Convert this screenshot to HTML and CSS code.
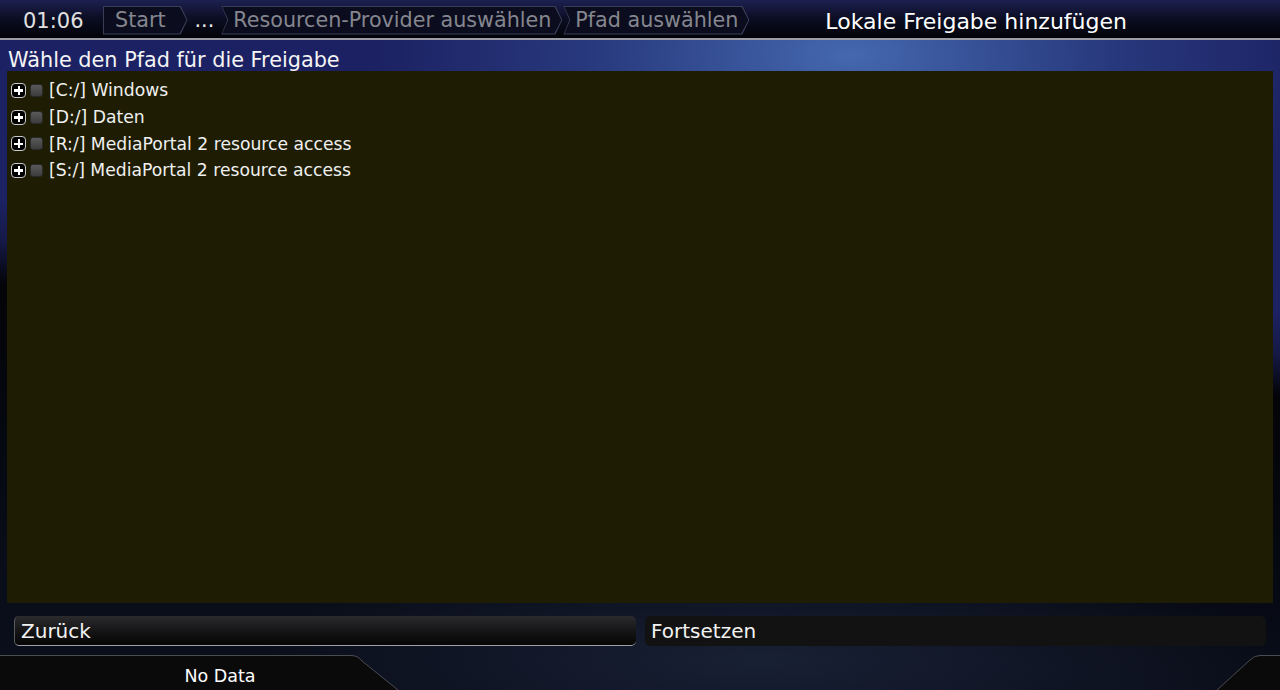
FILE: index.html
```html
<!DOCTYPE html>
<html lang="de">
<head>
    <meta charset="UTF-8">
    <meta name="viewport" content="width=device-width, initial-scale=1.0">
    <title>Lokale Freigabe hinzufügen</title>
    <link rel="stylesheet" href="styles.css">
</head>
<body>
    <header class="topbar">
        <div class="clock">01:06</div>
        <nav class="crumbs">
            <div class="crumb first">Start</div>
            <div class="crumb plain">...</div>
            <div class="crumb">Resourcen-Provider auswählen</div>
            <div class="crumb">Pfad auswählen</div>
        </nav>
        <div class="title">Lokale Freigabe hinzufügen</div>
    </header>

    <main class="content">
        <div class="prompt">Wähle den Pfad für die Freigabe</div>
        <ul class="tree">
            <li class="node"><span class="expander"></span><span class="check"></span>[C:/] Windows</li>
            <li class="node"><span class="expander"></span><span class="check"></span>[D:/] Daten</li>
            <li class="node"><span class="expander"></span><span class="check"></span>[R:/] MediaPortal 2 resource access</li>
            <li class="node"><span class="expander"></span><span class="check"></span>[S:/] MediaPortal 2 resource access</li>
        </ul>
        <div class="actions">
            <button class="btn focused">Zurück</button>
            <button class="btn">Fortsetzen</button>
        </div>
    </main>

    <footer class="footer">
        <div class="tab tab-left">
            <svg class="tab-shape" width="400" height="35" viewBox="0 0 400 35">
                <path d="M0 1 H351 Q358 1 362 6 L398 35 H0 Z" fill="#0a0a0b"/>
                <path d="M0 0.5 H351 Q358 0.5 362 6 L398 35" fill="none" stroke="#4b4b52" stroke-width="1"/>
            </svg>
            <span class="tab-text">No Data</span>
        </div>
        <div class="tab tab-right">
            <svg class="tab-shape" width="63" height="35" viewBox="0 0 63 35">
                <path d="M0 35 L33 5 Q37 1 43 1 H63 V35 Z" fill="#0a0a0b"/>
                <path d="M0 35 L33 5 Q37 0.5 43 0.5 H63" fill="none" stroke="#4b4b52" stroke-width="1"/>
            </svg>
        </div>
    </footer>
</body>
</html>
```

FILE: styles.css
```css
* {
    box-sizing: border-box;
}
html, body {
    margin: 0;
    height: 690px;
    overflow: hidden;
}
body {
    font-family: "DejaVu Sans", sans-serif;
    color: #f2f2f2;
    display: flex;
    flex-direction: column;
    background:
        radial-gradient(ellipse 480px 230px at 850px 55px, rgba(72, 110, 182, 0.92), rgba(55, 85, 155, 0.45) 55%, rgba(40, 60, 130, 0) 100%),
        radial-gradient(ellipse 520px 110px at 760px 660px, #182034, rgba(20, 26, 40, 0) 100%),
        linear-gradient(185deg, #1b2062 0, #1c2263 310px, #161a48 350px, #040408 395px, #070a14 600px, #0a0e1a 690px);
}

/* header */
.topbar {
    height: 40px;
    flex: none;
    display: flex;
    align-items: center;
    padding-left: 23px;
    background: linear-gradient(180deg, #1c2050 0, #0b0d22 50%, #020308 100%);
    border-bottom: 2px solid #9c9ca6;
}
.clock {
    font-size: 21px;
    color: #e0e0e0;
    width: 80px;
    margin-top: 4px;
}
.crumbs {
    display: flex;
    align-items: center;
    height: 29px;
    margin-top: 2px;
}
.crumb {
    position: relative;
    height: 29px;
    line-height: 29px;
    font-size: 20.7px;
    color: #85868e;
    padding: 0 11px 0 12px;
    background: #3a3d56;
    clip-path: polygon(0 0, calc(100% - 7px) 0, 100% 50%, calc(100% - 7px) 100%, 0 100%, 6px 50%);
    margin-right: 1px;
    z-index: 0;
}
.crumb::before {
    content: "";
    position: absolute;
    inset: 1px;
    background: #0b0d1e;
    clip-path: polygon(0 0, calc(100% - 7px) 0, 100% 50%, calc(100% - 7px) 100%, 0 100%, 6px 50%);
    z-index: -1;
}
.crumb.first {
    padding: 0 22px 0 12px;
    margin-right: 0;
    clip-path: polygon(0 0, calc(100% - 7px) 0, 100% 50%, calc(100% - 7px) 100%, 0 100%);
}
.crumb.first::before {
    clip-path: polygon(0 0, calc(100% - 7px) 0, 100% 50%, calc(100% - 7px) 100%, 0 100%);
}
.crumb.plain {
    background: none;
    clip-path: none;
    color: #e8e8e8;
    padding: 0 7px 0 7px;
    margin-right: 0;
}
.crumb.plain::before {
    display: none;
}
.title {
    font-size: 22px;
    color: #ffffff;
    margin-left: 75px;
    margin-top: 4px;
}

/* content */
.content {
    flex: 1;
    display: flex;
    flex-direction: column;
    padding: 0 7px;
}
.prompt {
    font-size: 20.8px;
    height: 31px;
    line-height: 20px;
    padding-top: 10px;
    padding-left: 1px;
    color: #f4f4f4;
}
.tree {
    list-style: none;
    margin: 0;
    padding: 6px 0 0 4px;
    height: 532px;
    background: #1e1d03;
}
.node {
    display: flex;
    align-items: center;
    height: 26.7px;
    font-size: 17.2px;
    color: #f0f0f0;
}
.expander {
    position: relative;
    width: 15px;
    height: 15px;
    margin-right: 4px;
    border: 1px solid #c8c8c8;
    border-radius: 4px;
    background: #000;
}
.expander::before,
.expander::after {
    content: "";
    position: absolute;
    background: #fff;
}
.expander::before {
    left: 2px;
    right: 2px;
    top: 5.5px;
    height: 2.5px;
}
.expander::after {
    top: 2px;
    bottom: 2px;
    left: 5.5px;
    width: 2.5px;
}
.check {
    width: 13px;
    height: 13px;
    margin-right: 6px;
    border-radius: 3px;
    background: linear-gradient(180deg, #5a5a5a, #3c3c3c);
    border: 1px solid #2a2a2a;
}

/* buttons */
.actions {
    display: flex;
    gap: 9px;
    padding: 13px 7px 0 7px;
    height: 52px;
}
.btn {
    flex: 1;
    height: 30px;
    text-align: left;
    font-family: "DejaVu Sans", sans-serif;
    font-size: 20px;
    color: #f2f2f2;
    padding: 0 6px;
    border-radius: 5px;
    border: none;
    background: #121212;
}
.btn.focused {
    background: linear-gradient(180deg, #2b2b2d 0, #121213 60%, #060607 100%);
    border-left: 1px solid #5a5a5e;
    border-bottom: 1px solid #a0a0a6;
}

/* footer */
.footer {
    height: 35px;
    flex: none;
    display: flex;
    justify-content: space-between;
}
.tab {
    position: relative;
    height: 35px;
}
.tab-left {
    width: 400px;
}
.tab-right {
    width: 63px;
}
.tab-shape {
    position: absolute;
    left: 0;
    top: 0;
}
.tab-text {
    position: relative;
    display: block;
    width: 440px;
    text-align: center;
    line-height: 42px;
    font-size: 17.5px;
    color: #ffffff;
}
```
